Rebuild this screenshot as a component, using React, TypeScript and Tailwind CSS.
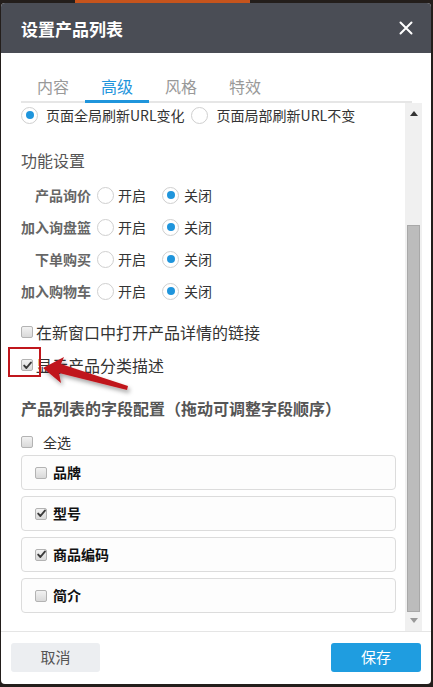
import React from "react";

function Radio({ checked }: { checked?: boolean }) {
  return (
    <span className="flex h-[17px] w-[17px] shrink-0 items-center justify-center rounded-full border border-[#cfcfcf] bg-white">
      {checked && <span className="h-[8px] w-[8px] rounded-full bg-[#1f95dc]" />}
    </span>
  );
}

function Check({ checked }: { checked?: boolean }) {
  return (
    <span className="flex h-[12px] w-[12px] shrink-0 items-center justify-center rounded-[2px] border border-[#b3b3b3] bg-gradient-to-b from-[#f2f2f2] to-[#d9d9d9]">
      {checked && (
        <svg width="9" height="9" viewBox="0 0 9 9">
          <path d="M1.2 4.6 L3.4 7 L7.9 1.6" fill="none" stroke="#3a3a3a" strokeWidth="1.9" strokeLinecap="round" strokeLinejoin="round" />
        </svg>
      )}
    </span>
  );
}

function FuncRow({ label }: { label: string }) {
  return (
    <div className="flex h-[32px] items-center">
      <span className="w-[70px] text-right text-[14px] font-bold text-[#666]">{label}</span>
      <span className="ml-[6px] flex items-center">
        <Radio />
        <span className="ml-[4px] text-[14px] text-[#333]">开启</span>
      </span>
      <span className="ml-[16px] flex items-center">
        <Radio checked />
        <span className="ml-[5px] text-[14px] text-[#333]">关闭</span>
      </span>
    </div>
  );
}

function Card({ label, checked }: { label: string; checked?: boolean }) {
  return (
    <div className="flex h-[35px] items-center rounded-[4px] border border-[#dcdcdc] bg-[#fdfdfd] pl-[13px]">
      <Check checked={checked} />
      <span className="ml-[6px] text-[14px] font-bold text-[#111]">{label}</span>
    </div>
  );
}

export default function App() {
  return (
    <div className="relative h-[687px] w-[433px] overflow-hidden bg-[#231e1b] pl-[1px] pt-[3px] font-['Noto_Sans_CJK_SC',sans-serif]">
      <div className="absolute left-[75px] top-0 h-[3px] w-[175px] bg-[#c6541c]" />
      <div className="relative flex h-[681px] w-[430px] flex-col overflow-hidden rounded-[4px] bg-white">
        {/* header */}
        <div className="flex h-[50px] shrink-0 items-center justify-between bg-[#4a4d55] pl-[20px] pr-[18px]">
          <span className="text-[17px] font-bold leading-none text-white">设置产品列表</span>
          <svg width="14" height="14" viewBox="0 0 14 14">
            <path d="M1.5 1.5 L12.5 12.5 M12.5 1.5 L1.5 12.5" stroke="#fff" strokeWidth="2" strokeLinecap="round" />
          </svg>
        </div>
        {/* tabs */}
        <div className="ml-[20px] mr-[19px] flex h-[50px] shrink-0 items-end border-b-2 border-[#e6e6e6] pt-[22px]">
          {["内容", "高级", "风格", "特效"].map((t, i) => (
            <div
              key={t}
              className={
                i === 1
                  ? "-mb-[2px] flex h-[28px] w-[64px] justify-center border-b-[3px] border-[#1f95dc] text-[16px] leading-[22px] text-[#1f95dc]"
                  : "-mb-[2px] flex h-[28px] w-[64px] justify-center text-[16px] leading-[22px] text-[#999]"
              }
            >
              {t}
            </div>
          ))}
        </div>
        {/* scroll region */}
        <div className="flex h-[528px] shrink-0">
          <div className="flex-1 overflow-hidden pl-[20px] pr-[9px]">
            <div className="flex h-[24px] items-center text-[14px] text-[#333]">
              <Radio checked />
              <span className="ml-[8px]">页面全局刷新URL变化</span>
              <span className="ml-[6px]">
                <Radio />
              </span>
              <span className="ml-[9px]">页面局部刷新URL不变</span>
            </div>
            <div className="mt-[21px] h-[24px] text-[16px] leading-[24px] text-[#555]">功能设置</div>
            <div className="mt-[7px]">
              <FuncRow label="产品询价" />
              <FuncRow label="加入询盘篮" />
              <FuncRow label="下单购买" />
              <FuncRow label="加入购物车" />
            </div>
            <div className="mt-[9px] flex h-[32px] items-center">
              <Check />
              <span className="ml-[3px] text-[16px] text-[#333]">在新窗口中打开产品详情的链接</span>
            </div>
            <div className="flex h-[34px] items-center">
              <Check checked />
              <span className="ml-[3px] text-[16px] text-[#333]">显示产品分类描述</span>
            </div>
            <div className="mt-[14px] h-[24px] text-[16px] font-bold leading-[24px] text-[#555]">
              产品列表的字段配置（拖动可调整字段顺序）
            </div>
            <div className="mt-[12px] flex h-[20px] items-center">
              <Check />
              <span className="ml-[10px] text-[14px] text-[#333]">全选</span>
            </div>
            <div className="mt-[3px] flex flex-col gap-[6px]">
              <Card label="品牌" />
              <Card label="型号" checked />
              <Card label="商品编码" checked />
              <Card label="简介" />
            </div>
          </div>
          {/* scrollbar */}
          <div className="mr-[9px] flex w-[17px] flex-col items-center bg-[#f0f0f0]">
            <div className="flex h-[20px] items-center justify-center">
              <svg width="8" height="5" viewBox="0 0 8 5">
                <path d="M0 5 L4 0 L8 5 Z" fill="#333" />
              </svg>
            </div>
            <div className="mt-[102px] h-[387px] w-[13px] border border-[#a8a8a8] bg-[#bcbcbc]" />
            <div className="flex h-[16px] items-center justify-center">
              <svg width="8" height="5" viewBox="0 0 8 5">
                <path d="M0 0 L8 0 L4 5 Z" fill="#999" />
              </svg>
            </div>
          </div>
        </div>
        {/* footer */}
        <div className="flex flex-1 items-start justify-between border-t border-[#e5e5e5] px-[10px] pt-[11px]">
          <button className="h-[29px] w-[89px] rounded-[3px] bg-[#eceef1] text-[15px] text-[#555]">取消</button>
          <button className="h-[29px] w-[90px] rounded-[3px] bg-[#1f9de0] text-[15px] text-white">保存</button>
        </div>
      </div>
      {/* annotation overlay */}
      <svg className="pointer-events-none absolute left-0 top-0" width="433" height="687" viewBox="0 0 433 687">
        <defs>
          <filter id="sh" x="-20%" y="-50%" width="140%" height="200%">
            <feDropShadow dx="2" dy="3" stdDeviation="2" floodColor="#000" floodOpacity="0.35" />
          </filter>
        </defs>
        <rect x="9" y="348" width="31" height="28" fill="none" stroke="#c0161c" strokeWidth="2" />
        <polygon
          points="43,368 64,357 61,364 128,386 127,390 59,373 61,383"
          fill="#c0161c"
          filter="url(#sh)"
        />
      </svg>
    </div>
  );
}
